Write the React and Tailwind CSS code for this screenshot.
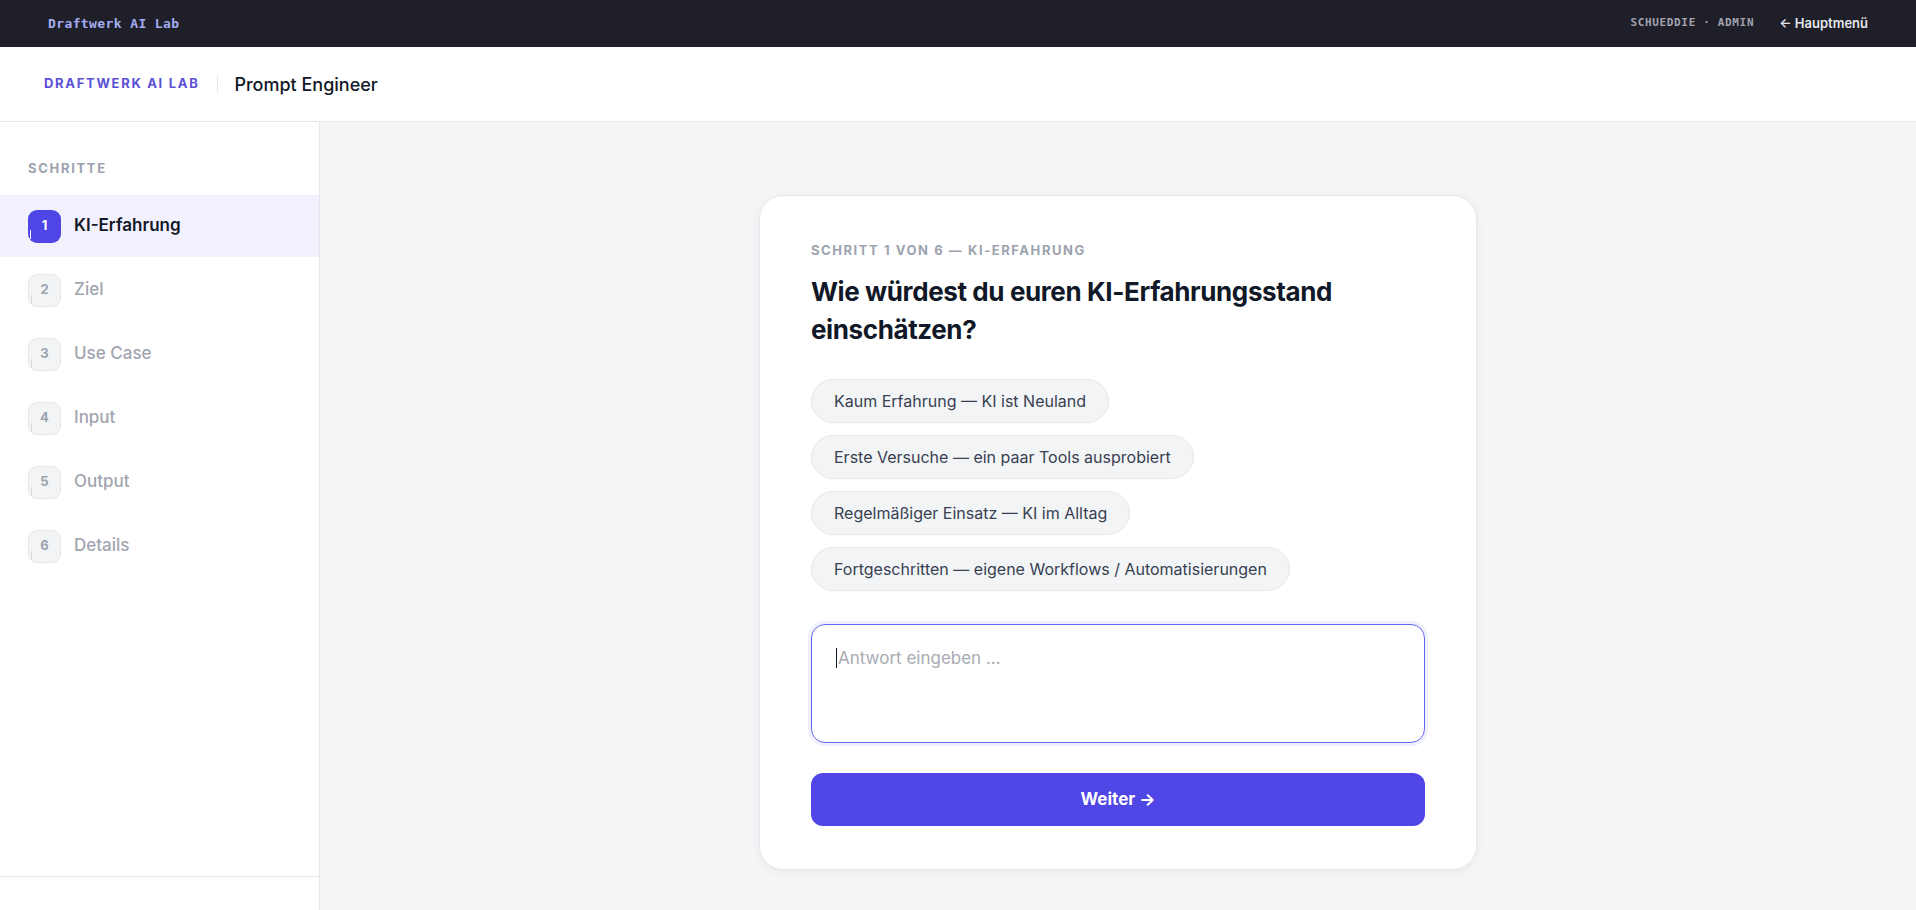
import React from "react";

const steps = [
  { n: 1, label: "KI-Erfahrung", active: true },
  { n: 2, label: "Ziel" },
  { n: 3, label: "Use Case" },
  { n: 4, label: "Input" },
  { n: 5, label: "Output" },
  { n: 6, label: "Details" },
];

const options = [
  "Kaum Erfahrung — KI ist Neuland",
  "Erste Versuche — ein paar Tools ausprobiert",
  "Regelmäßiger Einsatz — KI im Alltag",
  "Fortgeschritten — eigene Workflows / Automatisierungen",
];

const inter = { fontFamily: "Inter, 'Noto Sans', sans-serif" };

export default function App() {
  return (
    <div className="h-[910px] flex flex-col bg-[#f5f5f7] overflow-hidden" style={inter}>
      {/* Top bar */}
      <div className="h-[47px] shrink-0 bg-[#1f1f2a] flex items-center justify-between pl-[48px] pr-[48px]">
        <span className="text-[13px] font-bold tracking-[0.03em] text-[#a5adf0] font-['DejaVu_Sans_Mono',monospace]">
          Draftwerk AI Lab
        </span>
        <div className="flex items-center gap-[25px]">
          <span className="text-[11px] font-bold tracking-[0.06em] text-[#a1a3ad] font-['DejaVu_Sans_Mono',monospace]">
            SCHUEDDIE · ADMIN
          </span>
          <span className="text-[13px] font-semibold text-[#e5e7eb]">← Hauptmenü</span>
        </div>
      </div>

      {/* Header */}
      <div className="h-[75px] shrink-0 bg-white border-b border-[#e5e7eb] flex items-center pl-[44px]">
        <span className="text-[13px] font-bold tracking-[0.13em] text-[#5b50d6]">DRAFTWERK AI LAB</span>
        <span className="w-px h-[18px] bg-[#e5e7eb] ml-[18px] mr-[16px]"></span>
        <span className="text-[18px] font-medium text-[#111827]">Prompt Engineer</span>
      </div>

      <div className="flex flex-1 min-h-0">
        {/* Sidebar */}
        <aside className="w-[320px] shrink-0 bg-white border-r border-[#e5e7eb] flex flex-col">
          <div className="flex-1">
            <div className="pt-[38px] pl-[28px] text-[13px] leading-[16px] font-bold tracking-[0.13em] text-[#9ca3af]">
              SCHRITTE
            </div>
            <div className="mt-[19px] flex flex-col gap-[2px]">
              {steps.map((s) => (
                <div
                  key={s.n}
                  className={
                    "h-[62px] flex items-center pl-[28px] gap-[13px] " +
                    (s.active ? "bg-[#f2f1fd]" : "")
                  }
                >
                  <div
                    className={
                      "relative w-[33px] h-[33px] rounded-[9px] flex items-center justify-center text-[13px] font-bold " +
                      (s.active
                        ? "bg-[#4f46e5] text-white"
                        : "bg-[#f3f4f6] border border-[#e5e7eb] text-[#9ca3af]")
                    }
                  >
                    {s.n}
                    <span
                      className={
                        "absolute left-[2px] top-[20px] w-px h-[9px] " +
                        (s.active ? "bg-white" : "bg-[#d9dbe0]")
                      }
                    ></span>
                  </div>
                  <span
                    className={
                      "text-[17px] " +
                      (s.active ? "font-semibold text-[#111827]" : "font-medium text-[#a1a5b0]")
                    }
                  >
                    {s.label}
                  </span>
                </div>
              ))}
            </div>
          </div>
          <div className="h-[34px] shrink-0 border-t border-[#e5e7eb]"></div>
        </aside>

        {/* Main */}
        <main className="flex-1 flex justify-center pt-[73px]">
          <div className="w-[718px] h-[675px] bg-white rounded-[24px] border border-[#e8e8ec] shadow-[0_2px_10px_rgba(0,0,0,0.05)] px-[51px] pt-[45px] pb-[44px]">
            <div className="text-[13px] leading-[18px] font-bold tracking-[0.12em] text-[#9ca3af]">
              SCHRITT 1 VON 6 — KI-ERFAHRUNG
            </div>
            <h1 className="mt-[14px] text-[26px] leading-[38px] font-bold text-[#111827] tracking-[-0.015em]">
              Wie würdest du euren KI-Erfahrungsstand
              <br />
              einschätzen?
            </h1>
            <div className="mt-[30px] flex flex-col items-start gap-[12px]">
              {options.map((o) => (
                <button
                  key={o}
                  className="h-[44px] px-[22px] rounded-full bg-[#f3f4f6] border border-[#e5e7eb] text-[16px] text-[#374151]"
                >
                  {o}
                </button>
              ))}
            </div>
            <div className="mt-[33px] h-[119px] rounded-[14px] border border-[#6366f1] ring-[3px] ring-[#6366f1]/10 px-[24px] pt-[20px]">
              <div className="flex items-center">
                <span className="w-px h-[20px] bg-[#111827] mr-[1px]"></span>
                <span className="text-[17px] leading-[26px] text-[#a8abb3]">Antwort eingeben ...</span>
              </div>
            </div>
            <button className="mt-[30px] w-full h-[53px] rounded-[12px] bg-[#4f46e5] text-white text-[17px] font-bold">
              Weiter →
            </button>
          </div>
        </main>
      </div>
    </div>
  );
}
